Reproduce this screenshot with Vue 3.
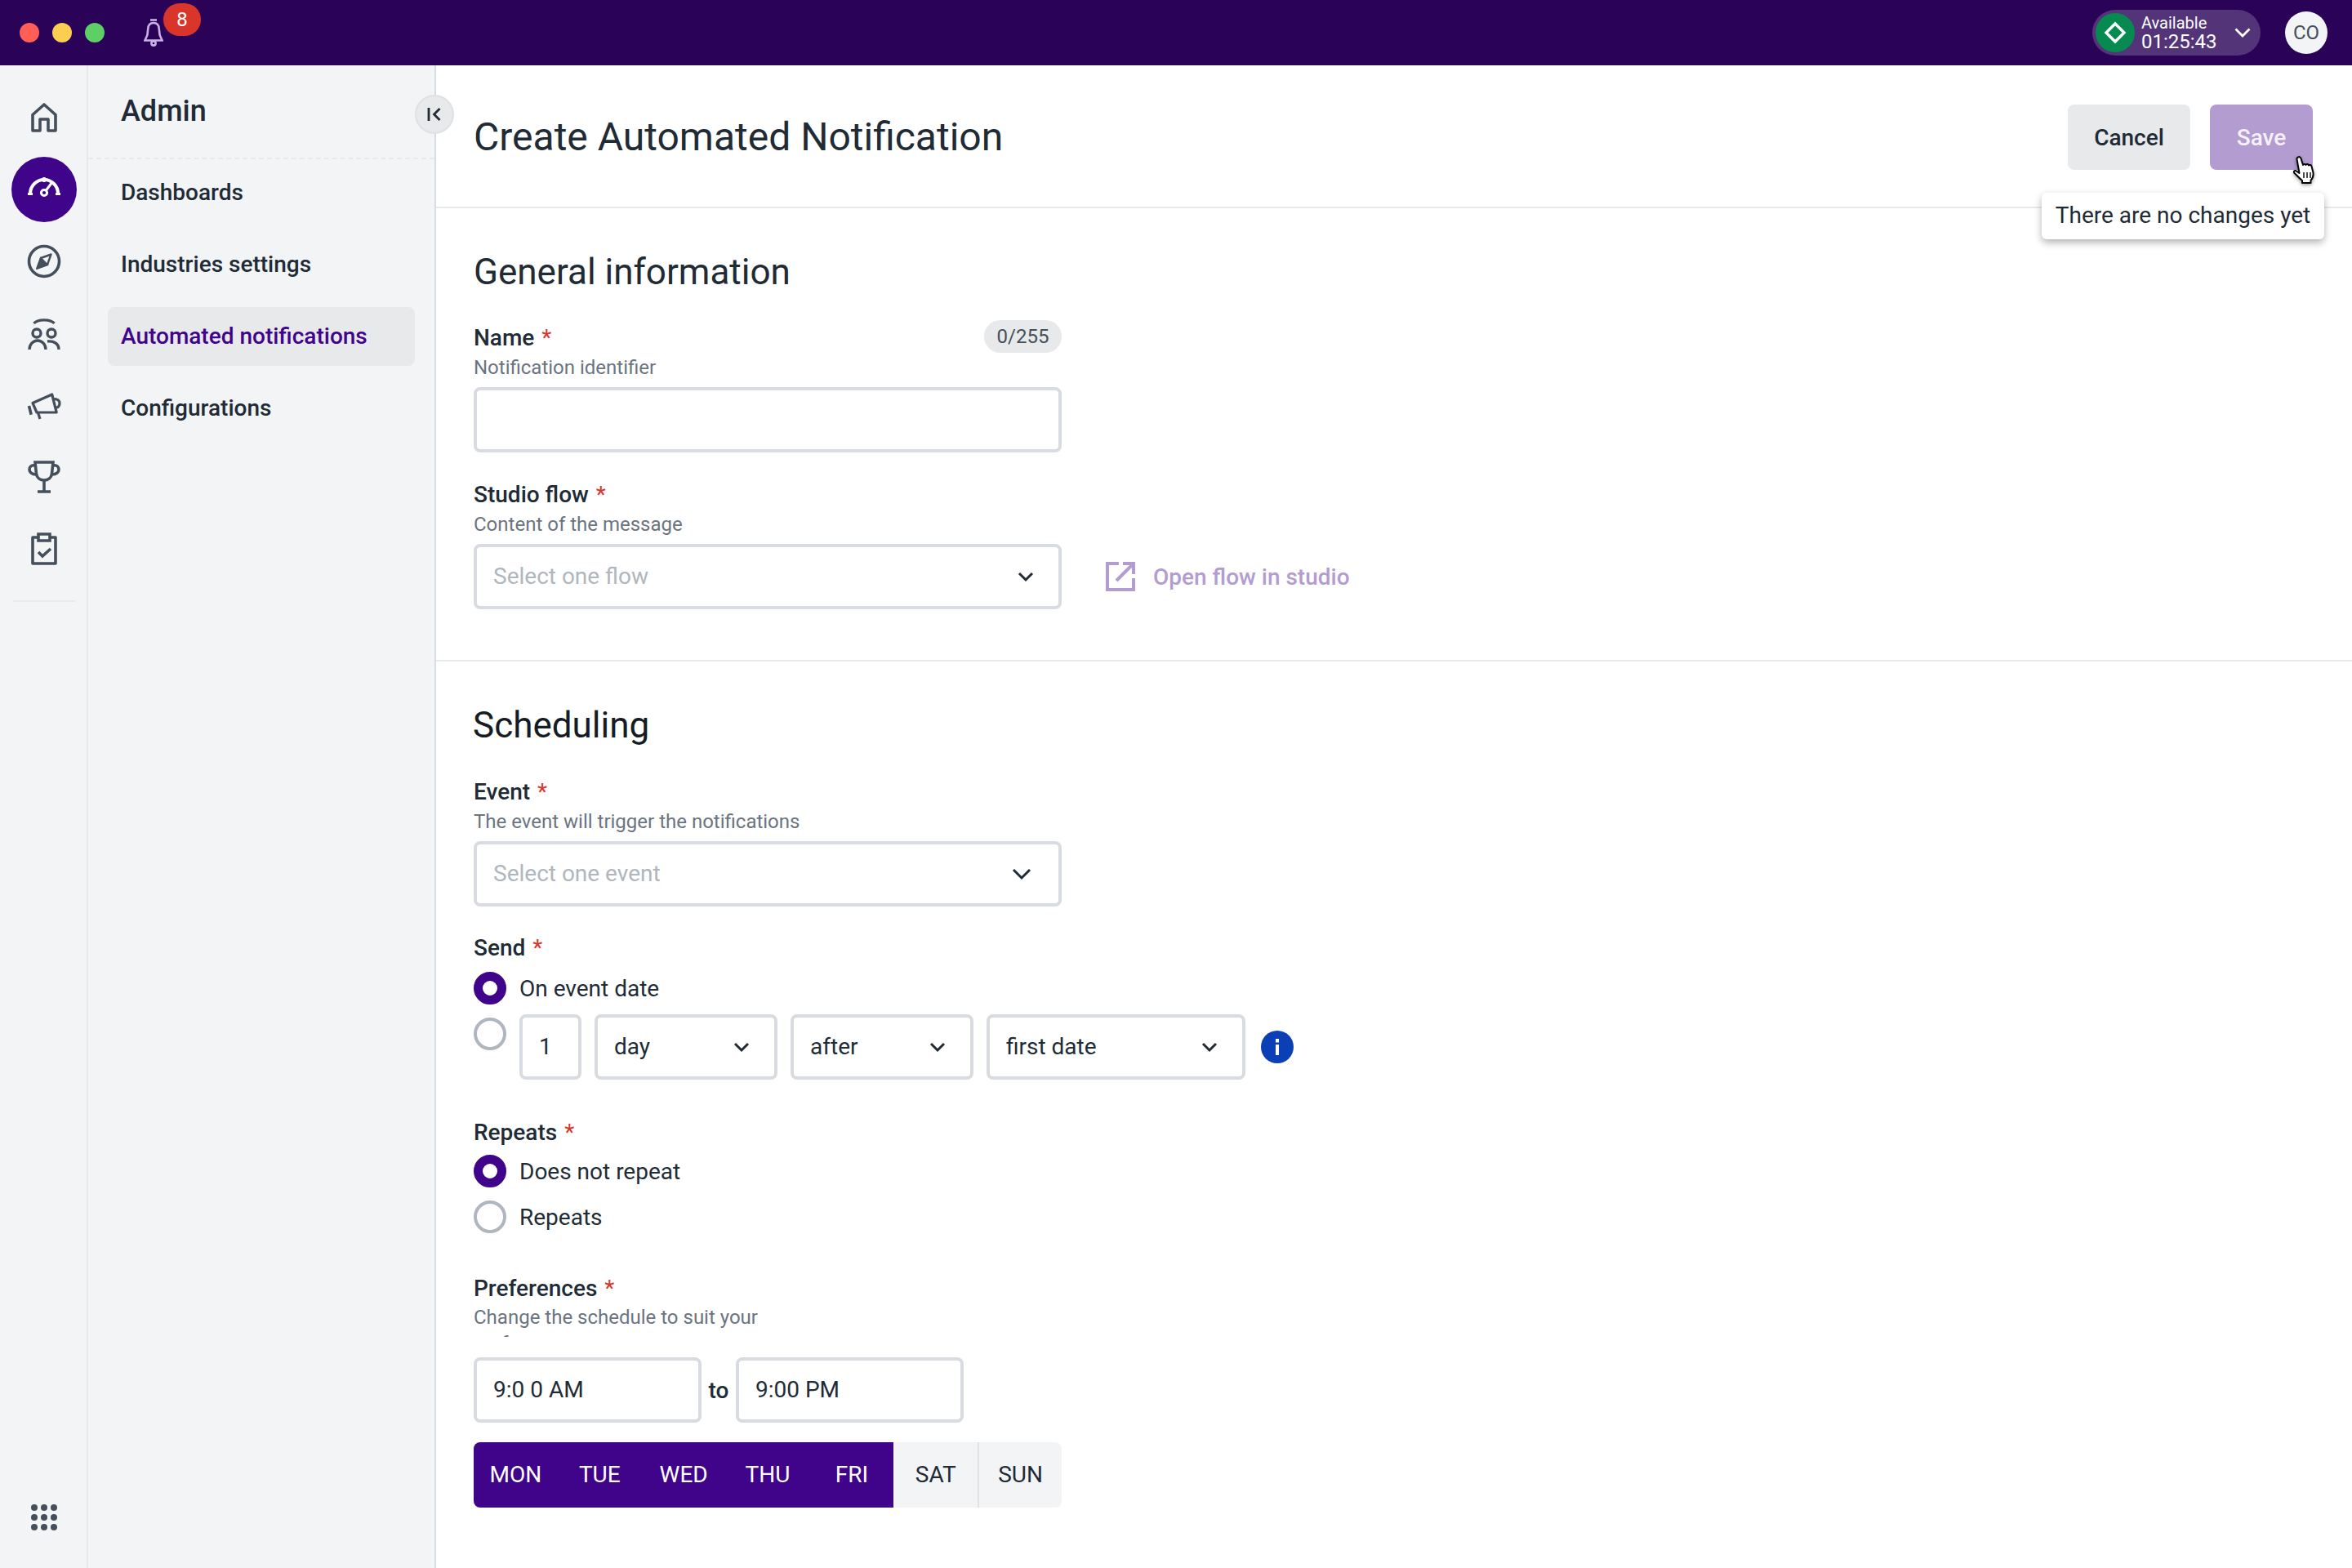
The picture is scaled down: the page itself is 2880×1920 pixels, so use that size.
<template>
  <div class="app">
    <header class="topbar">
      <div class="traffic">
        <span class="dot red"></span>
        <span class="dot yellow"></span>
        <span class="dot green"></span>
      </div>
      <div class="bell">
        <svg width="24" height="34" viewBox="0 0 24 34" fill="none" stroke="#c9b3e6" stroke-width="2.6">
          <path d="M8 1.5h8" />
          <path d="M12 5c-4.400 0-6.600 3.400-6.800 7.600L4.400 20 1.400 26.500h21.200L19.600 20l-.8-7.400C18.600 8.400 16.400 5 12 5z" />
          <circle cx="12" cy="30" r="2.600" />
        </svg>
        <span class="badge">8</span>
      </div>
      <div class="topbar-right">
        <div class="status">
          <span class="status-icon">
            <svg width="28" height="28" viewBox="0 0 28 28" fill="none" stroke="#fff" stroke-width="3.400">
              <path d="M14 3l11 11-11 11L3 14z" />
            </svg>
          </span>
          <div class="status-text">
            <span class="status-label">Available</span>
            <span class="status-time">01:25:43</span>
          </div>
          <svg class="status-chevron" width="20" height="12" viewBox="0 0 20 12" fill="none" stroke="#fff" stroke-width="2.800">
            <path d="M1.500 1.500L10 10l8.500-8.500" />
          </svg>
        </div>
        <div class="avatar">CO</div>
      </div>
    </header>

    <div class="main">
      <nav class="rail">
        <div class="rail-items">
          <div class="rail-item">
            <svg width="32" height="36" viewBox="0 0 32 36" fill="none" stroke="#454f5b" stroke-width="3.600" stroke-linejoin="round">
              <path d="M2 14.500L16 2l14 12.500V34H21V20H11v14H2z" />
            </svg>
          </div>
          <div class="rail-item">
            <span class="rail-active">
              <svg class="gauge" width="42" height="28" viewBox="0 0 42 28" fill="none" stroke="#fff" stroke-width="4">
                <path d="M4 23A17 17 0 0 1 38 23" />
                <path d="M1 23.500h6M35 23.500h6" stroke-width="3" />
                <path d="M21 3v6" stroke-width="3.400" />
                <path d="M23.500 19L31 9" stroke-width="3" />
                <circle cx="21" cy="22" r="3.600" stroke-width="3" />
              </svg>
            </span>
          </div>
          <div class="rail-item">
            <svg width="42" height="42" viewBox="0 0 42 42" fill="none" stroke="#454f5b" stroke-width="3.600">
              <circle cx="21" cy="21" r="18.500" />
              <path d="M29.500 12.500l-4.500 12.500-12.500 4.500 4.500-12.500z" stroke-width="2.400" stroke-linejoin="round" />
              <path d="M17 17l8 8-12.500 4.500z" fill="#454f5b" stroke-width="2" />
            </svg>
          </div>
          <div class="rail-item">
            <svg width="40" height="40" viewBox="0 0 40 40" fill="none" stroke="#454f5b" stroke-width="3.400">
              <path d="M7.500 8C12 2.500 28 2.500 32.500 8" />
              <circle cx="11" cy="20" r="5" />
              <circle cx="29" cy="20" r="5" />
              <path d="M2 40a10 11 0 0 1 20 0" />
              <path d="M24 30c8-1 14 3 14 10" />
            </svg>
          </div>
          <div class="rail-item">
            <svg width="42" height="38" viewBox="0 0 42 38" fill="none" stroke="#454f5b" stroke-width="3.200" stroke-linejoin="round">
              <path d="M7 16.500L30.700 6l5.500 22H12z" />
              <path d="M33.300 11.700c3.700-.5 6.700 1.800 6.700 5s-1.500 5-4 5.600" />
              <path d="M2.500 20l2.700 10.700" stroke-width="3.600" />
              <path d="M13.500 28l2.500 8" />
            </svg>
          </div>
          <div class="rail-item">
            <svg width="40" height="40" viewBox="0 0 40 40" fill="none" stroke="#454f5b" stroke-width="3.600">
              <path d="M9 2h22l-1.500 14c-.6 5-4.500 8-9.500 8s-8.900-3-9.500-8z" />
              <path d="M9 6C4 5 2 8 2 11s3 6 8 6" />
              <path d="M31 6c5-1 7 2 7 5s-3 6-8 6" />
              <path d="M20 24v13M12 38h16" />
            </svg>
          </div>
          <div class="rail-item">
            <svg width="32" height="40" viewBox="0 0 32 40" fill="none" stroke="#454f5b" stroke-width="3.600">
              <path d="M9 6H2v32h28V6h-7" stroke-linejoin="round" />
              <path d="M9 2h14v8H9z" />
              <path d="M9 24l5 5 10-9" />
            </svg>
          </div>
        </div>
        <div class="rail-divider"></div>
        <div class="apps-grid">
          <span v-for="n in 9" :key="n" class="apps-dot"></span>
        </div>
      </nav>

      <aside class="sidebar">
        <div class="sidebar-title">Admin</div>
        <button class="collapse-btn">
          <svg width="18" height="18" viewBox="0 0 18 18" fill="none" stroke="#212b36" stroke-width="2.800">
            <path d="M2 1v16M15.500 2L8.500 9l7 7" />
          </svg>
        </button>
        <ul class="side-nav">
          <li v-for="item in navItems" :key="item" class="side-item" :class="{ active: item === activeItem }">
            {{ item }}
          </li>
        </ul>
      </aside>

      <section class="content">
        <div class="page-header">
          <h1 class="page-title">Create Automated Notification</h1>
          <div class="page-actions">
            <button class="btn btn-cancel">Cancel</button>
            <button class="btn btn-save">Save</button>
          </div>
          <div class="tooltip">There are no changes yet</div>
          <svg class="hand-cursor" width="32" height="36" viewBox="0 0 32 36" fill="#fff" stroke="#000" stroke-width="2" stroke-linejoin="round">
            <path d="M8 2.500c1.500-1 3 0 3.500 1.500l2.500 8c.5-1.500 3-1.500 3.500 0 .5-1.300 3-1.300 3.500.5.800-1 3-.8 3.500 1l2 8c.5 4-.5 7-3 9.500v3H13v-3c-3-2-6-6-9-8.500-2-1.800-1-4 1-3.500l4.500 3L6.500 5c-.3-1 .5-2 1.500-2.500z" />
            <path d="M15 21v7M19 21v7M23 21v7" stroke-width="1.400" />
          </svg>
        </div>

        <div class="section section-general">
          <h2 class="section-title">General information</h2>
          <div class="field">
            <div class="label-row">
              <span class="label">Name <i class="req">*</i></span>
              <span class="counter">0/255</span>
            </div>
            <div class="hint">Notification identifier</div>
            <div class="input wide"></div>
          </div>
          <div class="field next-field">
            <span class="label">Studio flow <i class="req">*</i></span>
            <div class="hint">Content of the message</div>
            <div class="flow-row">
              <div class="input wide select">
                <span class="placeholder">Select one flow</span>
                <svg class="chevron" width="20" height="13" viewBox="0 0 20 13" fill="none" stroke="#212b36" stroke-width="3">
                  <path d="M2 2l8 8 8-8" />
                </svg>
              </div>
              <a class="open-link">
                <svg width="36" height="36" viewBox="0 0 36 36" fill="none" stroke="#b39cd0" stroke-width="4">
                  <path d="M16 2H2v32h32V20" />
                  <path d="M13 23L33 3M21 2h13v13" />
                </svg>
                Open flow in studio
              </a>
            </div>
          </div>
        </div>

        <div class="section section-scheduling">
          <h2 class="section-title">Scheduling</h2>
          <div class="field">
            <span class="label">Event <i class="req">*</i></span>
            <div class="hint">The event will trigger the notifications</div>
            <div class="input wide select event-select">
              <span class="placeholder">Select one event</span>
              <svg class="chevron" width="24" height="15" viewBox="0 0 24 15" fill="none" stroke="#212b36" stroke-width="3">
                <path d="M2 2l10 10 10-10" />
              </svg>
            </div>
          </div>

          <div class="field send-field">
            <span class="label">Send <i class="req">*</i></span>
            <label class="radio-row">
              <span class="radio on"></span>
              On event date
            </label>
            <div class="send-custom">
              <span class="radio"></span>
              <div class="input num">1</div>
              <div v-for="opt in sendOptions" :key="opt.text" class="input select" :class="opt.cls">
                <span>{{ opt.text }}</span>
                <svg class="chevron" width="20" height="13" viewBox="0 0 20 13" fill="none" stroke="#212b36" stroke-width="3">
                  <path d="M2 2l8 8 8-8" />
                </svg>
              </div>
              <svg class="info" width="40" height="40" viewBox="0 0 40 40">
                <circle cx="20" cy="20" r="20" fill="#0b3fb5" />
                <rect x="18" y="17" width="4" height="13" fill="#fff" />
                <rect x="18" y="10" width="4" height="4.500" fill="#fff" />
              </svg>
            </div>
          </div>

          <div class="field repeats-field">
            <span class="label">Repeats <i class="req">*</i></span>
            <label class="radio-row">
              <span class="radio on"></span>
              Does not repeat
            </label>
            <label class="radio-row second">
              <span class="radio"></span>
              Repeats
            </label>
          </div>

          <div class="field prefs-field">
            <span class="label">Preferences <i class="req">*</i></span>
            <div class="hint clipped">Change the schedule to suit your preferences</div>
            <div class="time-row">
              <div class="input time">9:0 0 AM</div>
              <span class="to">to</span>
              <div class="input time">9:00 PM</div>
            </div>
            <div class="days">
              <span v-for="d in days" :key="d.name" class="day" :class="{ on: d.on }">{{ d.name }}</span>
            </div>
          </div>
        </div>
      </section>
    </div>
  </div>
</template>

<script setup>
const navItems = ['Dashboards', 'Industries settings', 'Automated notifications', 'Configurations'];
const activeItem = 'Automated notifications';

const sendOptions = [
  { text: 'day', cls: 'opt' },
  { text: 'after', cls: 'opt' },
  { text: 'first date', cls: 'opt-wide' }
];

const days = [
  { name: 'MON', on: true },
  { name: 'TUE', on: true },
  { name: 'WED', on: true },
  { name: 'THU', on: true },
  { name: 'FRI', on: true },
  { name: 'SAT', on: false },
  { name: 'SUN', on: false }
];
</script>

<style>
html,
body {
  margin: 0;
  background: #fff;
}
</style>

<style scoped>
.app {
  width: 2880px;
  height: 1920px;
  display: flex;
  flex-direction: column;
  overflow: hidden;
  font-family: Roboto, "Liberation Sans", sans-serif;
  color: #212b36;
  background: #fff;
}

/* Top bar */
.topbar {
  height: 80px;
  flex: none;
  display: flex;
  align-items: center;
  background: #2a0358;
  padding: 0 30px 0 24px;
}

.traffic {
  display: flex;
  gap: 16px;
}

.dot {
  width: 24px;
  height: 24px;
  border-radius: 50%;
}

.red { background: #ff5f57; }
.yellow { background: #fbcd50; }
.green { background: #5dcf66; }

.bell {
  position: relative;
  margin-left: 48px;
  width: 24px;
  height: 34px;
}

.badge {
  position: absolute;
  left: 24px;
  top: -19px;
  width: 46px;
  height: 40px;
  border-radius: 20px;
  background: #d9352b;
  color: #fff;
  font-size: 24px;
  line-height: 40px;
  text-align: center;
}

.topbar-right {
  margin-left: auto;
  display: flex;
  align-items: center;
  gap: 30px;
}

.status {
  width: 206px;
  height: 56px;
  box-sizing: border-box;
  border-radius: 28px;
  background: #533478;
  display: flex;
  align-items: center;
  padding-left: 4px;
  color: #fff;
}

.status-icon {
  width: 48px;
  height: 48px;
  border-radius: 50%;
  background: #078a50;
  display: flex;
  align-items: center;
  justify-content: center;
}

.status-text {
  display: flex;
  flex-direction: column;
  margin-left: 8px;
}

.status-label {
  font-size: 20px;
  line-height: 22px;
}

.status-time {
  font-size: 24px;
  line-height: 24px;
}

.status-chevron {
  margin-left: 21px;
}

.avatar {
  width: 52px;
  height: 52px;
  border-radius: 50%;
  background: #f3f4f6;
  color: #454f5b;
  font-size: 24px;
  line-height: 52px;
  text-align: center;
}

.main {
  flex: 1;
  display: flex;
  min-height: 0;
}

/* Icon rail */
.rail {
  width: 108px;
  flex: none;
  box-sizing: border-box;
  background: #f3f4f6;
  border-right: 2px solid #e8e9eb;
  padding: 20px 0 0 2px;
  display: flex;
  flex-direction: column;
  align-items: center;
}

.rail-items {
  width: 100%;
}

.rail-item {
  width: 100%;
  height: 88px;
  display: flex;
  align-items: center;
  justify-content: center;
}

.rail-active {
  width: 80px;
  height: 80px;
  border-radius: 50%;
  background: #3f048a;
  display: flex;
  align-items: center;
  justify-content: center;
}

.gauge {
  margin-bottom: 9px;
}

.rail-divider {
  width: 76px;
  height: 2px;
  background: #e8e9eb;
  margin-top: 19px;
}

.apps-grid {
  margin-top: auto;
  margin-bottom: 46px;
  display: grid;
  grid-template-columns: repeat(3, 8px);
  gap: 4px;
}

.apps-dot {
  width: 8px;
  height: 8px;
  border-radius: 50%;
  background: #454f5b;
}

/* Sidebar */
.sidebar {
  width: 426px;
  flex: none;
  box-sizing: border-box;
  position: relative;
  background: #f3f4f6;
  border-right: 2px solid #d8dbdf;
}

.sidebar-title {
  height: 115px;
  box-sizing: border-box;
  padding: 34px 0 0 40px;
  font-size: 36px;
  line-height: 44px;
  font-weight: 500;
  border-bottom: 2px dashed #e8e9eb;
}

.collapse-btn {
  position: absolute;
  top: 36px;
  right: -24px;
  width: 48px;
  height: 48px;
  padding: 0;
  border: 2px solid #dfe1e4;
  border-radius: 50%;
  background: #e8e9eb;
  display: flex;
  align-items: center;
  justify-content: center;
}

.side-nav {
  list-style: none;
  margin: 5px 0 0 24px;
  padding: 0;
  width: 376px;
  display: flex;
  flex-direction: column;
  gap: 16px;
}

.side-item {
  height: 72px;
  box-sizing: border-box;
  padding-left: 16px;
  border-radius: 8px;
  font-size: 28px;
  font-weight: 500;
  line-height: 72px;
}

.side-item.active {
  background: #e8e9eb;
  color: #3f048a;
}

/* Content */
.content {
  flex: 1;
  min-width: 0;
}

.page-header {
  position: relative;
  height: 175px;
  box-sizing: border-box;
  border-bottom: 2px solid #e8e9eb;
  padding: 48px 48px 0 46px;
  display: flex;
  justify-content: space-between;
  align-items: flex-start;
}

.page-title {
  margin: 0;
  font-size: 48px;
  line-height: 80px;
  font-weight: 400;
}

.page-actions {
  display: flex;
  gap: 24px;
}

.btn {
  height: 80px;
  border: 0;
  border-radius: 8px;
  font-family: inherit;
  font-size: 28px;
  font-weight: 500;
}

.btn-cancel {
  width: 150px;
  background: #e8e9eb;
  color: #212b36;
}

.btn-save {
  width: 126px;
  background: #b39cd0;
  color: #f5f0fa;
}

.tooltip {
  position: absolute;
  top: 156px;
  right: 34px;
  width: 346px;
  height: 57px;
  box-sizing: border-box;
  background: #fff;
  border-radius: 6px;
  box-shadow: 0 4px 10px rgba(0, 0, 0, 0.3);
  font-size: 28px;
  line-height: 56px;
  text-align: center;
}

.hand-cursor {
  position: absolute;
  top: 110px;
  right: 42px;
  filter: drop-shadow(0 2px 2px rgba(0, 0, 0, 0.35));
}

.section {
  padding-left: 46px;
}

.section-general {
  height: 555px;
  box-sizing: border-box;
  border-bottom: 2px solid #e8e9eb;
  padding-top: 50px;
}

.section-scheduling {
  padding-top: 50px;
}

.section-title {
  margin: 0;
  font-size: 44px;
  line-height: 56px;
  font-weight: 400;
}

.section-scheduling .section-title {
  color: #161c24;
  margin-left: -1px;
}

.field {
  display: flex;
  flex-direction: column;
  align-items: flex-start;
}

.section-general .section-title + .field {
  margin-top: 35px;
}

.section-scheduling .section-title + .field {
  margin-top: 36px;
}

.next-field {
  margin-top: 34px;
}

.label-row {
  width: 720px;
  height: 36px;
  display: flex;
  justify-content: space-between;
  align-items: center;
}

.label {
  font-size: 28px;
  line-height: 36px;
  font-weight: 500;
}

.req {
  color: #d9352b;
  font-style: normal;
  font-weight: 400;
  margin-left: 2px;
}

.counter {
  width: 95px;
  height: 40px;
  border-radius: 20px;
  background: #e8e9eb;
  color: #454f5b;
  font-size: 24px;
  line-height: 40px;
  text-align: center;
  margin-top: -4px;
}

.hint {
  margin-top: 2px;
  margin-bottom: 8px;
  font-size: 24px;
  line-height: 32px;
  color: #6b7480;
}

.hint.clipped {
  width: 400px;
  height: 40px;
  margin-top: 1px;
  margin-bottom: 25px;
  overflow: hidden;
}

.input {
  height: 80px;
  box-sizing: border-box;
  border: 4px solid #d8dbdf;
  border-radius: 8px;
  background: #fff;
  padding-left: 20px;
  font-size: 28px;
  line-height: 72px;
  flex: none;
}

.wide {
  width: 720px;
}

.select {
  display: flex;
  align-items: center;
  justify-content: space-between;
  padding-right: 30px;
}

.event-select {
  padding-right: 33px;
}

.placeholder {
  color: #b0b6bd;
}

.flow-row {
  display: flex;
  align-items: center;
}

.open-link {
  margin-left: 54px;
  display: flex;
  align-items: center;
  gap: 22px;
  font-size: 28px;
  font-weight: 500;
  color: #b39cd0;
}

.send-field {
  margin-top: 33px;
}

.radio-row {
  display: flex;
  align-items: center;
  gap: 16px;
  height: 40px;
  margin-top: 11px;
  font-size: 28px;
}

.repeats-field .radio-row {
  margin-top: 9px;
}

.repeats-field .radio-row.second {
  margin-top: 16px;
}

.radio {
  width: 40px;
  height: 40px;
  box-sizing: border-box;
  border: 4px solid #b0b6bd;
  border-radius: 50%;
  flex: none;
  background: #fff;
}

.radio.on {
  border: 11px solid #3f048a;
}

.send-custom {
  display: flex;
  align-items: flex-start;
  margin-top: 12px;
  gap: 16px;
}

.send-custom > .radio {
  margin-top: 4px;
}

.num {
  width: 76px;
}

.opt {
  width: 224px;
}

.opt-wide {
  width: 317px;
}

.info {
  margin-top: 20px;
  margin-left: 3px;
}

.repeats-field {
  margin-top: 47px;
}

.prefs-field {
  margin-top: 50px;
}

.time-row {
  display: flex;
  align-items: center;
}

.time {
  width: 279px;
}

.to {
  width: 42px;
  text-align: center;
  font-size: 28px;
  font-weight: 500;
}

.days {
  margin-top: 24px;
  width: 720px;
  height: 80px;
  display: grid;
  grid-template-columns: repeat(7, 1fr);
  border-radius: 8px;
  overflow: hidden;
  background: #f3f4f6;
}

.day {
  font-size: 28px;
  line-height: 80px;
  text-align: center;
}

.day.on {
  background: #3f048a;
  color: #fff;
}

.day:last-child {
  border-left: 2px solid #dfe1e4;
}
</style>
